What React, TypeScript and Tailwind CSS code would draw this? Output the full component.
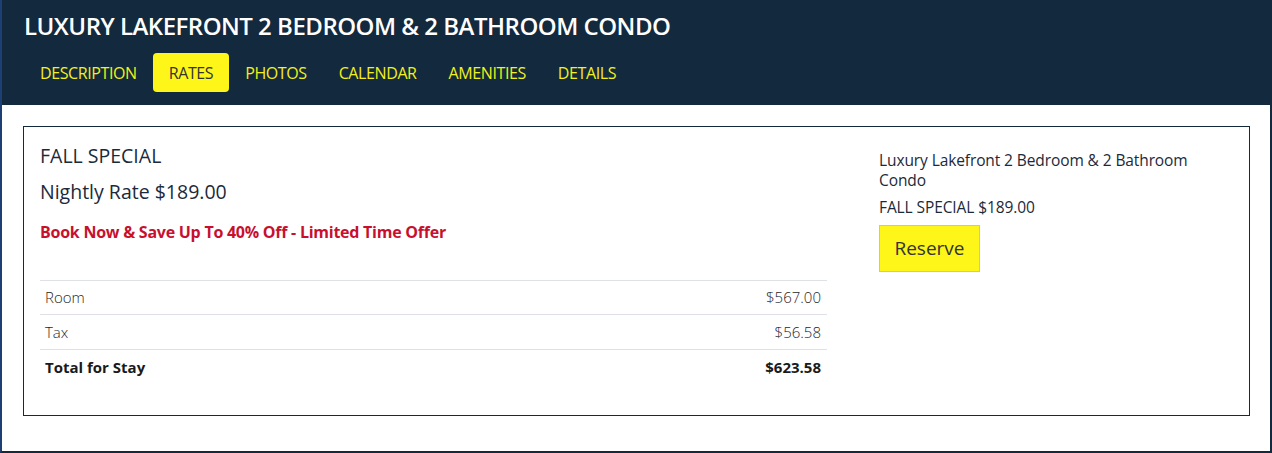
import React from "react";

const font = { fontFamily: '"Open Sans", "Noto Sans", sans-serif' };

export default function App() {
  const tabs = ["DESCRIPTION", "RATES", "PHOTOS", "CALENDAR", "AMENITIES", "DETAILS"];
  return (
    <div
      className="w-[1272px] h-[453px] bg-white border-l-2 border-l-[#1e3f73] border-r-2 border-r-[#13293d] border-b-2 border-b-[#13293d] overflow-hidden"
      style={font}
    >
      <header className="bg-[#13293d] h-[105px] pt-[10px] pl-[22px]">
        <h1 className="text-white text-[24px] font-semibold leading-[32px] tracking-[-0.5px]">
          LUXURY LAKEFRONT 2 BEDROOM &amp; 2 BATHROOM CONDO
        </h1>
        <nav className="flex mt-[11px]">
          {tabs.map((t) => (
            <a
              key={t}
              className={
                "h-[39px] px-[16px] flex items-center text-[16px] leading-none rounded-[4px] tracking-[-0.4px] " +
                (t === "RATES" ? "bg-[#fdf618] text-[#333333]" : "text-[#f3f01a]")
              }
            >
              {t}
            </a>
          ))}
        </nav>
      </header>
      <main className="pt-[21px] pl-[21px] pr-[20px]">
        <section className="border border-[#13293d] h-[290px] pt-[16px] pl-[16px] flex">
          <div className="w-[787px]">
            <h2 className="text-[#1b2a3a] text-[19.5px] leading-[26px]">FALL SPECIAL</h2>
            <p className="text-[#1b2a3a] text-[19.5px] leading-[26px] mt-[10px]">Nightly Rate $189.00</p>
            <p className="text-[#c8102e] text-[16px] font-bold leading-[20px] mt-[17px] tracking-[-0.25px]">
              Book Now &amp; Save Up To 40% Off - Limited Time Offer
            </p>
            <table className="w-full mt-[38px] text-[15px] text-[#1f1f1f] font-light">
              <tbody>
                <tr className="border-t border-[#dee2e6] h-[34px]">
                  <td className="px-[5px]">Room</td>
                  <td className="px-[6px] text-right">$567.00</td>
                </tr>
                <tr className="border-t border-[#dee2e6] h-[35px]">
                  <td className="px-[5px]">Tax</td>
                  <td className="px-[6px] text-right">$56.58</td>
                </tr>
                <tr className="border-t border-[#dee2e6] h-[35px] font-bold text-[#1a1a1a]">
                  <td className="px-[5px]">Total for Stay</td>
                  <td className="px-[6px] text-right">$623.58</td>
                </tr>
              </tbody>
            </table>
          </div>
          <div className="ml-[52px] pt-[7px]">
            <p className="text-[#1b2a3a] text-[15.5px] leading-[20px] tracking-[-0.1px]">
              Luxury Lakefront 2 Bedroom &amp; 2 Bathroom
              <br />
              Condo
            </p>
            <p className="text-[#1b2a3a] text-[15.5px] leading-[20px] mt-[7px] tracking-[-0.1px]">FALL SPECIAL $189.00</p>
            <button className="mt-[8px] w-[101px] h-[47px] bg-[#fdf618] border border-[#e0d80c] text-[#333333] text-[19px]">
              Reserve
            </button>
          </div>
        </section>
      </main>
    </div>
  );
}
